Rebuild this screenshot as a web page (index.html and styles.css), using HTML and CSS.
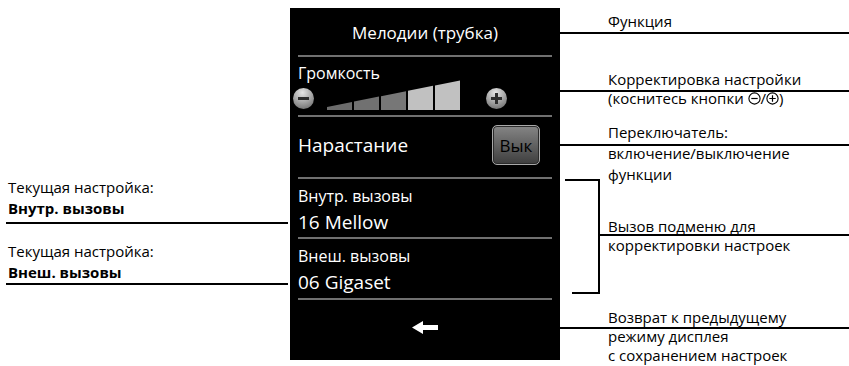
FILE: index.html
```html
<!DOCTYPE html>
<html lang="ru">
<head>
<meta charset="utf-8">
<title>Мелодии (трубка)</title>
<link rel="stylesheet" href="styles.css">
</head>
<body>
<div class="figure">
  <div class="lead lead-func"></div>
  <div class="lead lead-vol"></div>
  <div class="lead lead-switch"></div>
  <div class="lead lead-back"></div>
  <div class="bracket"></div>
  <div class="bracket-bottom"></div>
  <div class="bracket-mid"></div>

  <div class="left-notes">
    <div class="note">
      <div>Текущая настройка:</div>
      <div class="b">Внутр. вызовы</div>
    </div>
    <div class="note note-ext">
      <div>Текущая настройка:</div>
      <div class="b">Внеш. вызовы</div>
    </div>
  </div>

  <div class="screen">
    <div class="title">Мелодии (трубка)</div>
    <div class="sep"></div>
    <div class="vol">
      <div class="lbl">Громкость</div>
      <div class="vol-ctrl">
        <span class="knob knob-left"><span class="knob-minus"></span></span>
        <svg class="bars" width="135" height="30" viewBox="0 0 135 30">
          <polygon points="0,30 0,27 25,22 25,30" fill="#6c6c6c"/>
          <polygon points="27,30 27,21.6 52,16.6 52,30" fill="#717171"/>
          <polygon points="54,30 54,16.2 79,11.2 79,30" fill="#777777"/>
          <polygon points="81,30 81,10.8 106,5.8 106,30" fill="#c1c1c1"/>
          <polygon points="108,30 108,5.4 133,0.4 133,30" fill="#c1c1c1"/>
        </svg>
        <span class="knob knob-right"><span class="knob-minus"></span><span class="knob-plus"></span></span>
      </div>
    </div>
    <div class="sep"></div>
    <div class="toggle-row">
      <span class="big">Нарастание</span>
      <span class="btn">Вык</span>
    </div>
    <div class="sep"></div>
    <div class="item">
      <div class="lbl">Внутр. вызовы</div>
      <div class="val">16 Mellow</div>
    </div>
    <div class="sep"></div>
    <div class="item item-last">
      <div class="lbl">Внеш. вызовы</div>
      <div class="val">06 Gigaset</div>
    </div>
    <div class="sep"></div>
    <div class="back">
      <svg width="26" height="13" viewBox="0 0 26 13"><polygon points="0,6.5 11,0 11,4 26,4 26,9 11,9 11,13" fill="#fff"/></svg>
    </div>
  </div>

  <div class="right-notes">
    <div class="rn rn-func">Функция</div>
    <div class="rn rn-vol">Корректировка настройки<br>(коснитесь кнопки <svg class="ci" width="13" height="13" viewBox="0 0 13 13"><circle cx="6.5" cy="6.5" r="5.6" fill="none" stroke="#000" stroke-width="1.1"/><path d="M3.3 6.5h6.4" stroke="#000" stroke-width="1.2"/></svg>/<svg class="ci" width="13" height="13" viewBox="0 0 13 13"><circle cx="6.5" cy="6.5" r="5.6" fill="none" stroke="#000" stroke-width="1.1"/><path d="M3.3 6.5h6.4M6.5 3.3v6.4" stroke="#000" stroke-width="1.2"/></svg>)</div>
    <div class="rn rn-switch">Переключатель:<br>включение/выключение<br>функции</div>
    <div class="rn rn-sub">Вызов подменю для<br>корректировки настроек</div>
    <div class="rn rn-back">Возврат к предыдущему<br>режиму дисплея<br>с сохранением настроек</div>
  </div>
</div>
</body>
</html>
```

FILE: styles.css
```css
* {
  box-sizing: border-box;
  margin: 0;
  padding: 0;
}

body {
  margin: 0;
  background: #fff;
  font-family: "Open Sans", "Noto Sans", sans-serif;
  color: #000;
}

.figure {
  position: relative;
  width: 849px;
  height: 366px;
  display: flex;
  overflow: hidden;
}

/* leader lines (overlay) */
.lead {
  position: absolute;
  right: 0;
  height: 6px;
  background: #000;
  border: 2px solid #fff;
  border-right: 0;
}
.lead-func { top: 30px; left: 543px; }
.lead-vol { top: 88px; left: 543px; }
.lead-switch { top: 142px; left: 543px; }
.lead-back { top: 325px; left: 486px; }

.bracket {
  position: absolute;
  left: 565px;
  top: 179px;
  width: 35px;
  height: 115px;
  border-top: 2px solid #000;
  border-right: 2px solid #000;
}
.bracket-bottom {
  position: absolute;
  left: 572px;
  top: 292px;
  width: 28px;
  height: 2px;
  background: #000;
}
.bracket-mid {
  position: absolute;
  left: 598px;
  right: 0;
  top: 234px;
  height: 2px;
  background: #000;
}

/* left notes */
.left-notes {
  position: relative;
  z-index: 1;
  width: 290px;
  flex: none;
  padding-top: 177px;
  font-size: 15px;
  line-height: 21px;
}
.note {
  margin-left: 6px;
  width: 282px;
  padding-left: 2px;
  padding-bottom: 3px;
  border-bottom: 2px solid #000;
}
.note-ext {
  margin-top: 17px;
  padding-bottom: 0;
}
.b {
  font-weight: 700;
}

/* screen */
.screen {
  position: relative;
  z-index: 1;
  width: 270px;
  height: 352px;
  flex: none;
  margin-top: 8px;
  background: #000;
  color: #fff;
  display: flex;
  flex-direction: column;
  padding: 0 8px;
}
.sep {
  height: 2px;
  flex: none;
  background: #707070;
}
.title {
  height: 47px;
  flex: none;
  display: flex;
  align-items: center;
  justify-content: center;
  font-size: 17px;
  padding-top: 1px;
}
.vol {
  height: 58px;
  flex: none;
  padding-top: 6px;
}
.lbl {
  font-size: 16px;
  line-height: 20px;
}
.vol-ctrl {
  display: flex;
  align-items: flex-end;
  margin-top: -3px;
  height: 30px;
}
.knob {
  position: relative;
  width: 21px;
  height: 21px;
  border-radius: 50%;
  background: radial-gradient(circle at 45% 22%, #e6e6e6 0%, #b0b0b0 40%, #5e5e5e 100%);
  flex: none;
  margin-bottom: 1.5px;
}
.knob-left {
  margin-left: -5px;
}
.knob-right {
  margin-left: 24px;
}
.knob-minus {
  position: absolute;
  left: 5px;
  top: 9px;
  width: 11px;
  height: 3px;
  background: #2e2e2e;
}
.knob-plus {
  position: absolute;
  left: 9px;
  top: 5px;
  width: 3px;
  height: 11px;
  background: #2e2e2e;
}
.bars {
  display: block;
  flex: none;
  margin-left: 13px;
}

.toggle-row {
  height: 60px;
  flex: none;
  display: flex;
  align-items: center;
  justify-content: space-between;
  padding-bottom: 4px;
}
.big {
  font-size: 19px;
}
.btn {
  width: 48px;
  height: 40px;
  margin-right: 12px;
  border: 1px solid #a8a8a8;
  border-radius: 5px;
  background: linear-gradient(#858585, #3e3e3e);
  box-shadow: inset 0 0 0 1px #2a2a2a;
  color: #000;
  font-size: 17px;
  display: flex;
  align-items: center;
  justify-content: center;
}

.item {
  height: 58px;
  flex: none;
  padding-top: 7px;
}
.item-last {
  height: 59px;
}
.val {
  font-size: 19px;
  line-height: 24px;
  margin-top: 4px;
}

.back {
  height: 60px;
  flex: none;
  display: flex;
  justify-content: center;
  align-items: center;
  padding-bottom: 5px;
}
.back svg {
  display: block;
}

/* right notes */
.right-notes {
  position: relative;
  z-index: 1;
  flex: 1;
  padding-left: 48px;
  padding-top: 12px;
  font-size: 15px;
  line-height: 19px;
}
.rn-vol { margin-top: 39px; }
.rn-switch { margin-top: 14px; line-height: 21px; }
.rn-sub { margin-top: 32px; }
.rn-back { margin-top: 53px; }
.ci {
  vertical-align: -1px;
}
```
